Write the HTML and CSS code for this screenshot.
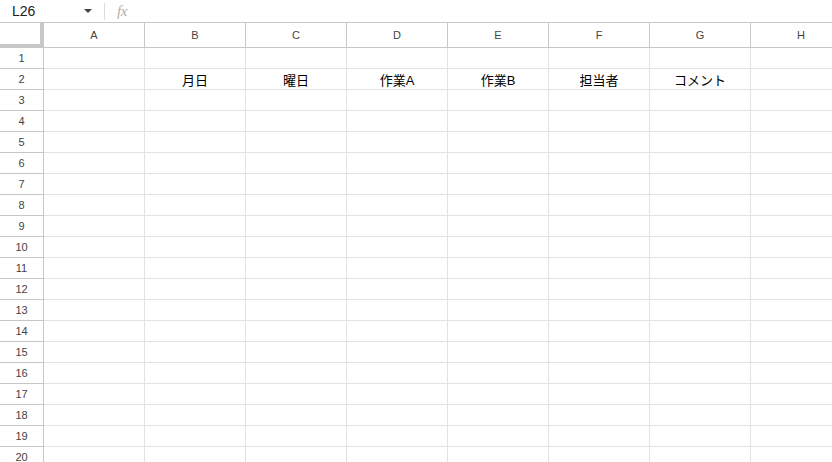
FILE: index.html
```html
<!DOCTYPE html>
<html lang="ja">
<head>
<meta charset="utf-8">
<title>Sheet</title>
<link rel="stylesheet" href="styles.css">
</head>
<body>
<div class="formula-bar">
  <div class="name-box"><span class="ref">L26</span><span class="caret"></span></div>
  <div class="sep"></div>
  <div class="fx">fx</div>
</div>
<div class="sheet">
  <div class="row head">
    <div class="corner"></div>
    <div class="ch a">A</div><div class="ch">B</div><div class="ch">C</div><div class="ch">D</div><div class="ch">E</div><div class="ch">F</div><div class="ch">G</div><div class="ch">H</div>
  </div>
  <div class="row"><div class="rh">1</div><div class="c a"></div><div class="c"></div><div class="c"></div><div class="c"></div><div class="c"></div><div class="c"></div><div class="c"></div><div class="c"></div></div>
  <div class="row"><div class="rh">2</div><div class="c a"></div><div class="c">月日</div><div class="c">曜日</div><div class="c">作業A</div><div class="c">作業B</div><div class="c">担当者</div><div class="c">コメント</div><div class="c"></div></div>
  <div class="row"><div class="rh">3</div><div class="c a"></div><div class="c"></div><div class="c"></div><div class="c"></div><div class="c"></div><div class="c"></div><div class="c"></div><div class="c"></div></div>
  <div class="row"><div class="rh">4</div><div class="c a"></div><div class="c"></div><div class="c"></div><div class="c"></div><div class="c"></div><div class="c"></div><div class="c"></div><div class="c"></div></div>
  <div class="row"><div class="rh">5</div><div class="c a"></div><div class="c"></div><div class="c"></div><div class="c"></div><div class="c"></div><div class="c"></div><div class="c"></div><div class="c"></div></div>
  <div class="row"><div class="rh">6</div><div class="c a"></div><div class="c"></div><div class="c"></div><div class="c"></div><div class="c"></div><div class="c"></div><div class="c"></div><div class="c"></div></div>
  <div class="row"><div class="rh">7</div><div class="c a"></div><div class="c"></div><div class="c"></div><div class="c"></div><div class="c"></div><div class="c"></div><div class="c"></div><div class="c"></div></div>
  <div class="row"><div class="rh">8</div><div class="c a"></div><div class="c"></div><div class="c"></div><div class="c"></div><div class="c"></div><div class="c"></div><div class="c"></div><div class="c"></div></div>
  <div class="row"><div class="rh">9</div><div class="c a"></div><div class="c"></div><div class="c"></div><div class="c"></div><div class="c"></div><div class="c"></div><div class="c"></div><div class="c"></div></div>
  <div class="row"><div class="rh">10</div><div class="c a"></div><div class="c"></div><div class="c"></div><div class="c"></div><div class="c"></div><div class="c"></div><div class="c"></div><div class="c"></div></div>
  <div class="row"><div class="rh">11</div><div class="c a"></div><div class="c"></div><div class="c"></div><div class="c"></div><div class="c"></div><div class="c"></div><div class="c"></div><div class="c"></div></div>
  <div class="row"><div class="rh">12</div><div class="c a"></div><div class="c"></div><div class="c"></div><div class="c"></div><div class="c"></div><div class="c"></div><div class="c"></div><div class="c"></div></div>
  <div class="row"><div class="rh">13</div><div class="c a"></div><div class="c"></div><div class="c"></div><div class="c"></div><div class="c"></div><div class="c"></div><div class="c"></div><div class="c"></div></div>
  <div class="row"><div class="rh">14</div><div class="c a"></div><div class="c"></div><div class="c"></div><div class="c"></div><div class="c"></div><div class="c"></div><div class="c"></div><div class="c"></div></div>
  <div class="row"><div class="rh">15</div><div class="c a"></div><div class="c"></div><div class="c"></div><div class="c"></div><div class="c"></div><div class="c"></div><div class="c"></div><div class="c"></div></div>
  <div class="row"><div class="rh">16</div><div class="c a"></div><div class="c"></div><div class="c"></div><div class="c"></div><div class="c"></div><div class="c"></div><div class="c"></div><div class="c"></div></div>
  <div class="row"><div class="rh">17</div><div class="c a"></div><div class="c"></div><div class="c"></div><div class="c"></div><div class="c"></div><div class="c"></div><div class="c"></div><div class="c"></div></div>
  <div class="row"><div class="rh">18</div><div class="c a"></div><div class="c"></div><div class="c"></div><div class="c"></div><div class="c"></div><div class="c"></div><div class="c"></div><div class="c"></div></div>
  <div class="row"><div class="rh">19</div><div class="c a"></div><div class="c"></div><div class="c"></div><div class="c"></div><div class="c"></div><div class="c"></div><div class="c"></div><div class="c"></div></div>
  <div class="row"><div class="rh">20</div><div class="c a"></div><div class="c"></div><div class="c"></div><div class="c"></div><div class="c"></div><div class="c"></div><div class="c"></div><div class="c"></div></div>
</div>
</body>
</html>
```
FILE: styles.css
```css
* { box-sizing: border-box; }
html, body {
  margin: 0;
  padding: 0;
  background: #fff;
  overflow: hidden;
  width: 832px;
  height: 462px;
  font-family: "Liberation Sans", Arial, "Noto Sans CJK JP", sans-serif;
}
.formula-bar {
  display: flex;
  align-items: center;
  height: 23px;
  border-bottom: 1px solid #c7c7c7;
}
.name-box {
  display: flex;
  align-items: center;
  width: 104px;
  padding-left: 12px;
  font-size: 14px;
  color: #202124;
}
.ref { flex: 1; }
.caret {
  width: 0;
  height: 0;
  border-left: 4px solid transparent;
  border-right: 4px solid transparent;
  border-top: 4px solid #444;
  margin-right: 12px;
}
.sep {
  width: 1px;
  height: 17px;
  background: #dadce0;
}
.fx {
  margin-left: 12px;
  font-family: "Liberation Serif", serif;
  font-style: italic;
  font-size: 15px;
  color: #b0b0b0;
  letter-spacing: -0.5px;
}
.sheet {
  display: flex;
  flex-direction: column;
}
.row {
  display: flex;
  height: 21px;
  flex-shrink: 0;
}
.row.head { height: 25px; }
.corner {
  width: 44px;
  flex-shrink: 0;
  border-right: 4px solid #c8c8c8;
  border-bottom: 4px solid #c8c8c8;
  background: #fff;
}
.ch {
  width: 101px;
  flex-shrink: 0;
  border-right: 1px solid #c7c7c7;
  border-bottom: 1px solid #c7c7c7;
  font-size: 11px;
  color: #444;
  display: flex;
  align-items: center;
  justify-content: center;
}
.ch.a, .c.a { width: 101px; }
.rh {
  width: 44px;
  flex-shrink: 0;
  border-right: 1px solid #c7c7c7;
  border-bottom: 1px solid #c7c7c7;
  font-size: 11px;
  color: #444;
  display: flex;
  align-items: center;
  justify-content: center;
}
.c {
  width: 101px;
  flex-shrink: 0;
  border-right: 1px solid #e2e2e2;
  border-bottom: 1px solid #e2e2e2;
  font-size: 13px;
  color: #000;
  display: flex;
  align-items: center;
  justify-content: center;
}
```
